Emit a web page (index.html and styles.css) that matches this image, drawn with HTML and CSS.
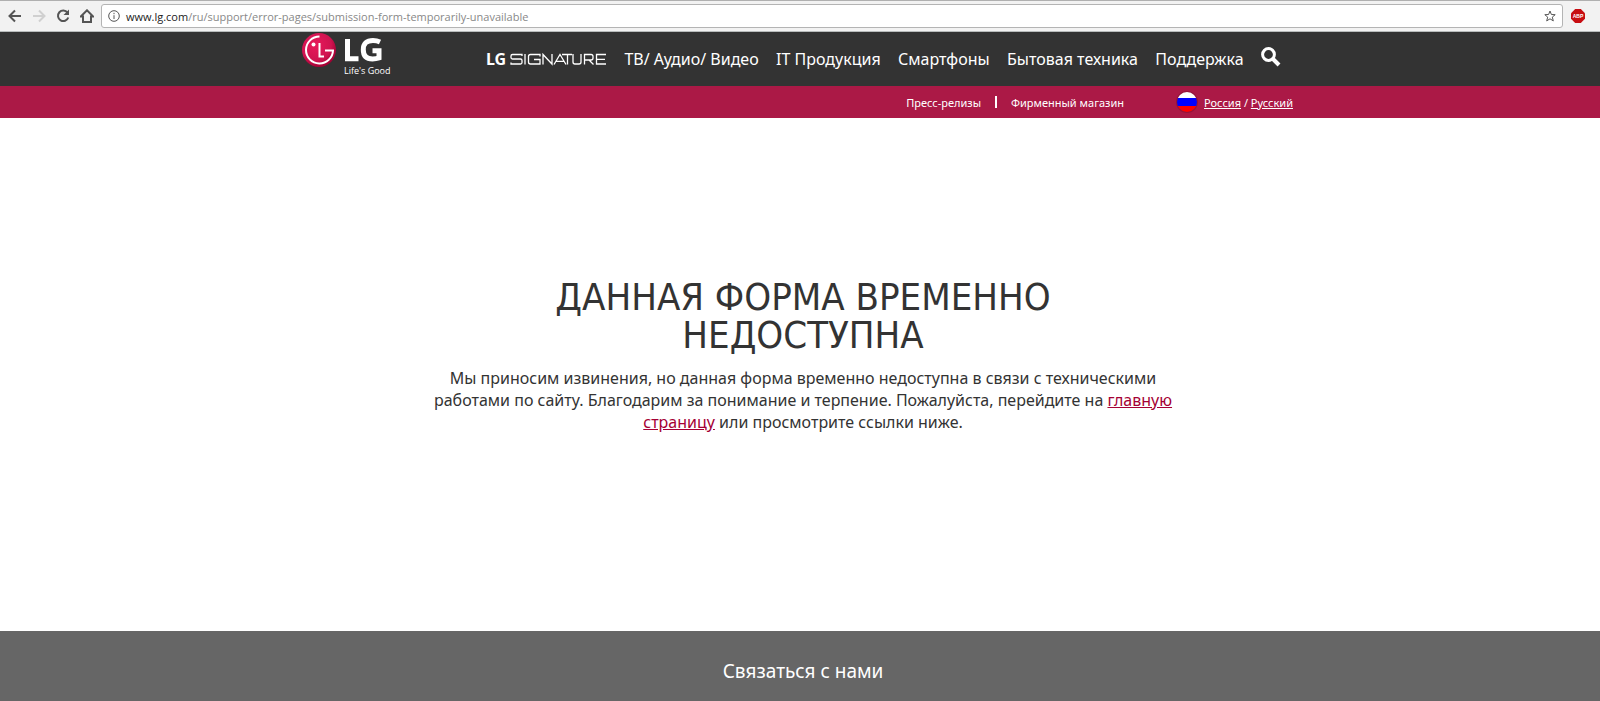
FILE: index.html
```html
<!DOCTYPE html>
<html lang="ru">
<head>
<meta charset="utf-8">
<title>LG Россия</title>
<link rel="stylesheet" href="styles.css">
</head>
<body>
<div class="browser">
  <button class="tool" aria-label="Назад"><svg width="14" height="14" viewBox="0 0 14 14"><path d="M13 7H2M7 1.5L1.5 7L7 12.500"/></svg></button>
  <button class="tool faded" aria-label="Вперёд"><svg width="14" height="14" viewBox="0 0 14 14"><path d="M1 7H12M7 1.500L12.500 7L7 12.500"/></svg></button>
  <button class="tool" aria-label="Обновить"><svg width="14" height="14" viewBox="0 0 14 14"><path d="M11.500 3.500A5.300 5.300 0 1 0 12.300 8.500"/><path class="solid" d="M13 0.500V6H7.500Z"/></svg></button>
  <button class="tool" aria-label="Домой"><svg width="14" height="14" viewBox="0 0 14 14"><path d="M0.800 7.500L7 1.300L13.200 7.500H11V13H3V7.500Z"/></svg></button>
  <div class="address">
    <svg class="info" width="12" height="12" viewBox="0 0 12 12"><circle cx="6" cy="6" r="5.300"/><path d="M6 5.200V9M6 2.800V4.200"/></svg>
    <span class="url"><span class="host">www.lg.com</span>/ru/support/error-pages/submission-form-temporarily-unavailable</span>
    <button class="star" aria-label="В закладки"><svg width="12" height="12" viewBox="0 0 12 12"><path d="M6 1L7.400 4.500L11.200 4.700L8.300 7.100L9.300 10.900L6 8.800L2.700 10.900L3.700 7.100L0.800 4.700L4.600 4.500Z"/></svg></button>
  </div>
  <button class="abp" aria-label="Adblock Plus"><svg width="14" height="14" viewBox="0 0 14 14"><path d="M4.200 0H9.800L14 4.200V9.800L9.800 14H4.200L0 9.800V4.200Z" fill="#c70d12"/><text x="7" y="9" text-anchor="middle">ABP</text></svg></button>
</div>
<header class="header">
  <div class="container header-row">
    <a class="logo" href="#" aria-label="LG Life's Good">
      <svg width="92" height="46" viewBox="0 0 92 46">
        <defs><radialGradient id="disc" cx="40%" cy="35%" r="65%"><stop offset="0" stop-color="#e8195b"/><stop offset="0.700" stop-color="#cf1450"/><stop offset="1" stop-color="#a50034"/></radialGradient></defs>
        <circle cx="18" cy="18" r="17" fill="url(#disc)"/>
        <path class="face" d="M18.500 4.500A13.500 13.500 0 1 0 32 18.500H24M18.500 11V24.500H23"/>
        <circle cx="12.500" cy="12.500" r="2" fill="#fff"/>
        <path class="letters" d="M46.500 7V26.700H57.500"/>
        <path class="letters" d="M79 10C76.500 8.800 74.500 8.500 72 8.500C65.500 8.500 62.300 11.500 62.300 17.700C62.300 24 65.500 26.900 71.500 26.900C74 26.900 76 26.600 78 25.900V18.700H71.500"/>
        <text x="43" y="42">Life's Good</text>
      </svg>
    </a>
    <nav class="nav">
      <a class="signature" href="#" aria-label="LG SIGNATURE"><svg width="122" height="22" viewBox="0 0 122 22">
        <text class="brand" x="1" y="17">LG</text>
        <path transform="translate(0 2)" d="M37 6V4.500H27.500Q26 4.500 26 6V7.500Q26 9 27.500 9H35.500Q37 9 37 10.500V12.500Q37 14 35.500 14H26V12.500M40 4V14.500M55 6.500V4.500H45.500Q43.500 4.500 43.500 6.500V12Q43.500 14 45.500 14H55V9.500H49M58 14.500V4.500L67 14V4M69 14.500L75 4.500L81 14.500M71 11.300H79M77 4.500H87M82.500 4.500V14.500M88 4V12Q88 14 90 14H94Q96 14 96 12V4M99.500 14.500V4.500H106Q108 4.500 108 6.500V8Q108 10 106 10H99.500M104 10L108.500 14.500M121 4.500H111.500V14H121M111.500 9.300H120"/>
      </svg></a>
      <a href="#">ТВ/ Аудио/ Видео</a>
      <a href="#">IT Продукция</a>
      <a href="#">Смартфоны</a>
      <a href="#">Бытовая техника</a>
      <a href="#">Поддержка</a>
      <button class="search" aria-label="Поиск"><svg width="20" height="20" viewBox="0 0 20 20"><circle cx="7.500" cy="7.500" r="5.900"/><path d="M12 12L18 18"/></svg></button>
    </nav>
  </div>
</header>
<div class="subbar">
  <div class="container subbar-row">
    <a href="#">Пресс-релизы</a>
    <span class="divider"></span>
    <a href="#">Фирменный магазин</a>
    <div class="locale">
      <svg width="22" height="22" viewBox="0 0 22 22"><clipPath id="round"><circle cx="11" cy="11" r="10"/></clipPath><circle cx="11" cy="11" r="11" fill="#94143c"/><g clip-path="url(#round)"><path fill="#fff" d="M0 0H22V7H0Z"/><path fill="#00f" d="M0 7H22V15H0Z"/><path fill="#f00" d="M0 15H22V22H0Z"/></g></svg>
      <span><a class="underlined" href="#">Россия</a> / <a class="underlined" href="#">Русский</a></span>
    </div>
  </div>
</div>
<main class="main">
  <h1>ДАННАЯ ФОРМА ВРЕМЕННО<br>НЕДОСТУПНА</h1>
  <p>Мы приносим извинения, но данная форма временно недоступна в связи с техническими<br>работами по сайту. Благодарим за понимание и терпение. Пожалуйста, перейдите на <a href="#">главную<br>страницу</a> или просмотрите ссылки ниже.</p>
</main>
<footer class="footer"><h2>Связаться с нами</h2></footer>
</body>
</html>
```
FILE: styles.css
```css
* { box-sizing: border-box; }
body {
  margin: 0;
  min-height: 100vh;
  display: flex;
  flex-direction: column;
  background: #fff;
  color: #333;
  font-family: "Noto Sans", sans-serif;
}
button { padding: 0; border: 0; background: none; display: flex; }
svg { display: block; }

.browser {
  display: flex;
  align-items: center;
  height: 32px;
  padding: 0 15px 0 8px;
  background: #f2f2f2;
  border-top: 1px solid #b0b0b0;
  border-bottom: 1px solid #b8bcbc;
}
.tool { margin-right: 10px; }
.tool svg { fill: none; stroke: #555; stroke-width: 2; }
.tool .solid { fill: #555; stroke: none; }
.faded svg { stroke: #d0d0d0; }
.address {
  flex: 1;
  display: flex;
  align-items: center;
  gap: 6px;
  height: 24px;
  margin-left: -3px;
  padding: 0 6px;
  background: #fff;
  border: 1px solid #b4b4b4;
  border-radius: 3px;
}
.info, .star svg { fill: none; stroke: #555; }
.url { flex: 1; font: 11px "Open Sans", sans-serif; color: #888; }
.host { color: #222; }
.abp { margin-left: 8px; }
.abp text { fill: #fff; font: bold 5px "Liberation Sans", sans-serif; }

.header { background: #333; color: #fff; }
.container { max-width: 994px; margin: 0 auto; }
.header-row { display: flex; height: 54px; }
.logo { margin-left: -2px; }
.logo text { fill: #fff; font: 9px "Open Sans", sans-serif; }
.face { fill: none; stroke: #fff; stroke-width: 2; }
.letters { fill: none; stroke: #fff; stroke-width: 5; }
.nav {
  flex: 1;
  display: flex;
  justify-content: space-between;
  align-items: center;
  padding: 0 16px 0 92px;
  font-size: 16px;
  white-space: nowrap;
}
.nav a { color: #fff; text-decoration: none; }
.signature path { fill: none; stroke: #fff; stroke-width: 1.3; }
.signature text { fill: #fff; font: bold 16px "Noto Sans", sans-serif; }
.search { padding-bottom: 4px; }
.search svg { fill: none; stroke: #fff; stroke-width: 3; }
.search path { stroke-width: 4; }

.subbar { background: #ab1946; color: #fff; font-size: 11px; }
.subbar a { color: #fff; text-decoration: none; }
.subbar-row {
  display: flex;
  align-items: center;
  justify-content: flex-end;
  height: 32px;
  padding-right: 4px;
}
.divider { width: 2px; height: 12px; margin: 0 14px; background: #fff; }
.locale { display: flex; align-items: center; gap: 6px; margin-left: 52px; }
.subbar .underlined { text-decoration: underline; }

.main { flex: 1; padding: 160px 0 0 6px; text-align: center; }
h1 {
  margin: 0;
  font-family: "DejaVu Sans Condensed", sans-serif;
  font-size: 38px;
  font-weight: normal;
  line-height: 38px;
}
p { margin: 13px 0 0; font-size: 16px; line-height: 22px; }
p a { color: #a50034; }
.footer {
  padding: 25px 0 15px 6px;
  background: #666;
  color: #fff;
  text-align: center;
}
h2 { margin: 0; font-size: 19px; font-weight: normal; line-height: 30px; }
```
